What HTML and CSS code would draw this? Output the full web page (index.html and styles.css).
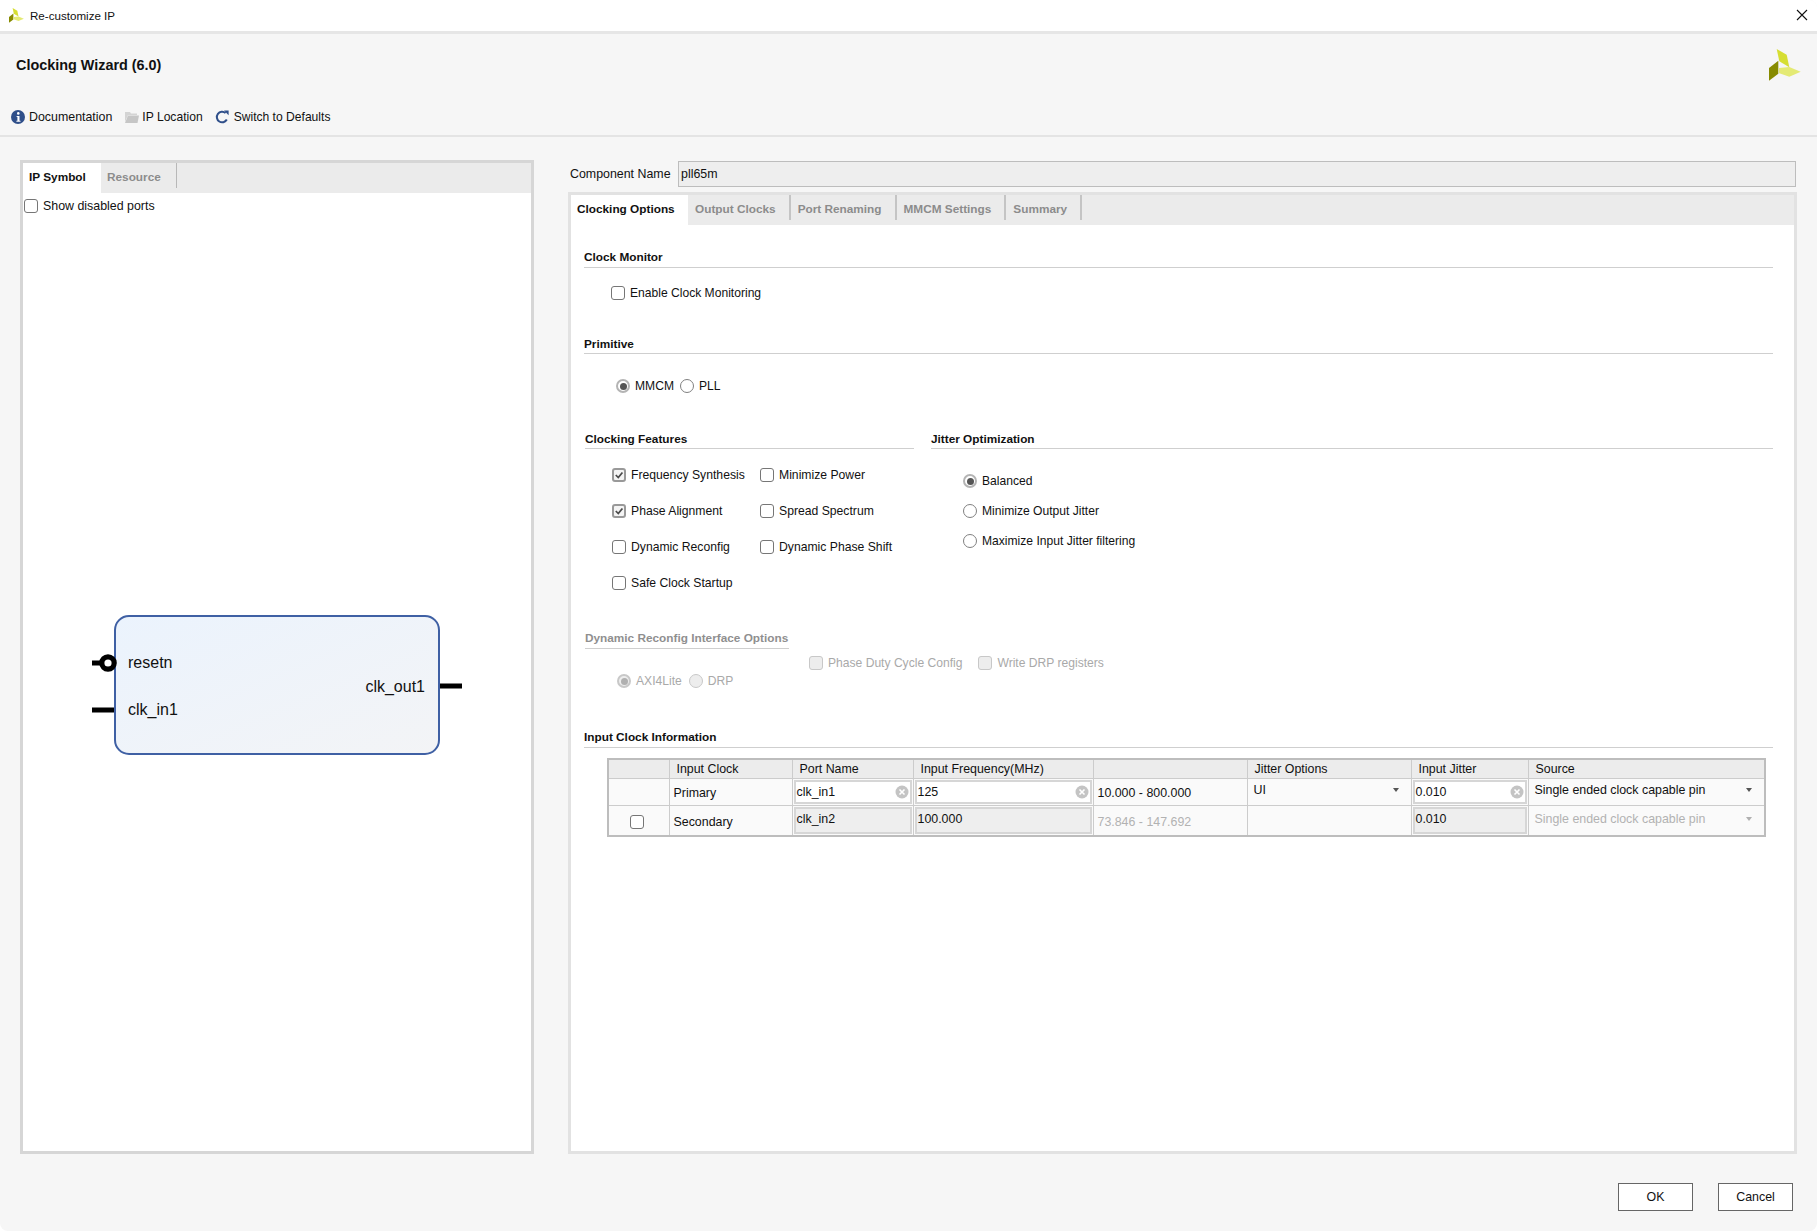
FILE: index.html
```html
<!DOCTYPE html>
<html lang="en">
<head>
    <meta charset="UTF-8">
    <title>Re-customize IP</title>
    <link rel="stylesheet" href="styles.css">
</head>
<body>
    <div class="window">
        <div class="titlebar">
            <svg class="titlelogo" viewBox="0 0 32 32"><polygon points="7.7,0 17.7,5.7 20.3,18.3 10.3,12.3" fill="#d6de33"/><polygon points="9.3,11.7 9.3,24.7 0,31.7 0,19" fill="#878b00"/><polygon points="10,19 20.3,18 31.7,22.7 20.3,27.7 9.7,24" fill="#e4ea74"/></svg>
            <span class="titletext">Re-customize IP</span>
            <svg class="closeicon" viewBox="0 0 12 12"><path d="M1 1L11 11M11 1L1 11" stroke="#111" stroke-width="1.1" fill="none"/></svg>
        </div>

        <div class="header">
            <div class="wizardname">Clocking Wizard (6.0)</div>
            <svg class="biglogo" viewBox="0 0 32 32"><polygon points="7.7,0 17.7,5.7 20.3,18.3 10.3,12.3" fill="#d6de33"/><polygon points="9.3,11.7 9.3,24.7 0,31.7 0,19" fill="#878b00"/><polygon points="10,19 20.3,18 31.7,22.7 20.3,27.7 9.7,24" fill="#e4ea74"/></svg>
        </div>

        <div class="toolbar">
            <div class="toolitem doc">
                <svg viewBox="0 0 14 14"><circle cx="7" cy="7" r="7" fill="#2f4f8a"/><circle cx="7.3" cy="3.4" r="1.3" fill="#fff"/><path d="M5.6 6h2.9v4.7h1v1H5.4v-1h1V7H5.6z" fill="#fff"/></svg>
                <span>Documentation</span>
            </div>
            <div class="toolitem loc">
                <svg viewBox="0 0 14 12"><path d="M0 1h5l1 1.5h6V4H3L0 11z" fill="#d4d4d4"/><path d="M3 4.5h11L12.5 12H0z" fill="#c6c6c6"/></svg>
                <span>IP Location</span>
            </div>
            <div class="toolitem defaults">
                <svg viewBox="0 0 14 14"><path d="M11.8 9.6A5.3 5.3 0 1 1 10.6 3" stroke="#2f4f8a" stroke-width="2" fill="none"/><polygon points="9,0.5 13.6,0.5 13.6,5.2" fill="#2f4f8a"/></svg>
                <span>Switch to Defaults</span>
            </div>
        </div>

        <div class="main">
            <div class="leftpanel">
                <div class="tabbar">
                    <div class="tab active lefttab1">IP Symbol</div>
                    <div class="tab lefttab2">Resource</div>
                </div>
                <div class="leftbody">
                    <label class="opt showports"><span class="box"></span>Show disabled ports</label>
                    <svg class="symbol" width="400" height="160" viewBox="0 0 400 160">
                        <defs>
                            <linearGradient id="blockfill" x1="0" y1="0" x2="1" y2="1">
                                <stop offset="0" stop-color="#ebf3fd"/>
                                <stop offset="1" stop-color="#f3f4f6"/>
                            </linearGradient>
                        </defs>
                        <rect x="23" y="11" width="324" height="138" rx="14" fill="url(#blockfill)" stroke="#3f60a4" stroke-width="2"/>
                        <rect x="0" y="55.5" width="12" height="5" fill="#000"/>
                        <circle cx="16" cy="58" r="6.2" fill="#fff" stroke="#000" stroke-width="5.2"/>
                        <rect x="0" y="102.5" width="22" height="5" fill="#000"/>
                        <rect x="348" y="78.5" width="22" height="5" fill="#000"/>
                        <text x="36" y="63" class="portname">resetn</text>
                        <text x="36" y="110" class="portname">clk_in1</text>
                        <text x="333" y="87" class="portname" text-anchor="end">clk_out1</text>
                    </svg>
                </div>
            </div>

            <div class="rightcol">
                <div class="namerow">
                    <span class="namelabel">Component Name</span>
                    <div class="namefield">pll65m</div>
                </div>
                <div class="rightpanel">
                    <div class="tabbar">
                        <div class="tab active">Clocking Options</div>
                        <div class="tab sep">Output Clocks</div>
                        <div class="tab sep">Port Renaming</div>
                        <div class="tab sep">MMCM Settings</div>
                        <div class="tab sep">Summary</div>
                    </div>
                    <div class="content">
                        <div class="section monitor">Clock Monitor</div>
                        <label class="opt enable"><span class="box"></span>Enable Clock Monitoring</label>

                        <div class="section primitive">Primitive</div>
                        <div class="primradios">
                            <label class="opt"><span class="radio on"></span>MMCM</label>
                            <label class="opt"><span class="radio"></span>PLL</label>
                        </div>

                        <div class="featurerow">
                            <div class="featurecol">
                                <div class="section">Clocking Features</div>
                                <div class="checkgrid">
                                    <label class="opt"><span class="box on"><svg viewBox="0 0 14 14"><path d="M2.5 7l3.5 3.6L11.8 3.4" stroke="#4a4a4a" stroke-width="2.4" fill="none"/></svg></span>Frequency Synthesis</label>
                                    <label class="opt"><span class="box"></span>Minimize Power</label>
                                    <label class="opt"><span class="box on"><svg viewBox="0 0 14 14"><path d="M2.5 7l3.5 3.6L11.8 3.4" stroke="#4a4a4a" stroke-width="2.4" fill="none"/></svg></span>Phase Alignment</label>
                                    <label class="opt"><span class="box"></span>Spread Spectrum</label>
                                    <label class="opt"><span class="box"></span>Dynamic Reconfig</label>
                                    <label class="opt"><span class="box"></span>Dynamic Phase Shift</label>
                                    <label class="opt"><span class="box"></span>Safe Clock Startup</label>
                                </div>
                            </div>
                            <div class="jittercol">
                                <div class="section">Jitter Optimization</div>
                                <div class="jitterradios">
                                    <label class="opt"><span class="radio on"></span>Balanced</label>
                                    <label class="opt"><span class="radio"></span>Minimize Output Jitter</label>
                                    <label class="opt"><span class="radio"></span>Maximize Input Jitter filtering</label>
                                </div>
                            </div>
                        </div>

                        <div class="section drphead">Dynamic Reconfig Interface Options</div>
                        <div class="drprow">
                            <div class="drpradios">
                                <label class="opt off"><span class="radio on"></span>AXI4Lite</label>
                                <label class="opt off"><span class="radio"></span>DRP</label>
                            </div>
                            <div class="drpchecks">
                                <label class="opt off"><span class="box"></span>Phase Duty Cycle Config</label>
                                <label class="opt off"><span class="box"></span>Write DRP registers</label>
                            </div>
                        </div>

                        <div class="section inputhead">Input Clock Information</div>
                        <table class="clocktable">
                            <colgroup>
                                <col class="c1"><col class="c2"><col class="c3"><col class="c4">
                                <col class="c5"><col class="c6"><col class="c7"><col class="c8">
                            </colgroup>
                            <tr class="headrow">
                                <th></th>
                                <th class="indent">Input Clock</th>
                                <th class="indent">Port Name</th>
                                <th class="indent">Input Frequency(MHz)</th>
                                <th></th>
                                <th class="indent">Jitter Options</th>
                                <th class="indent">Input Jitter</th>
                                <th class="indent">Source</th>
                            </tr>
                            <tr class="row1">
                                <td></td>
                                <td class="plain">Primary</td>
                                <td><div class="field">clk_in1<svg class="clear" viewBox="0 0 14 14"><circle cx="7" cy="7" r="6.5" fill="#c4c4c4"/><path d="M4.5 4.5l5 5M9.5 4.5l-5 5" stroke="#fff" stroke-width="1.6"/></svg></div></td>
                                <td><div class="field">125<svg class="clear" viewBox="0 0 14 14"><circle cx="7" cy="7" r="6.5" fill="#c4c4c4"/><path d="M4.5 4.5l5 5M9.5 4.5l-5 5" stroke="#fff" stroke-width="1.6"/></svg></div></td>
                                <td class="plain">10.000 - 800.000</td>
                                <td class="combo">UI<span class="arrow"></span></td>
                                <td><div class="field">0.010<svg class="clear" viewBox="0 0 14 14"><circle cx="7" cy="7" r="6.5" fill="#c4c4c4"/><path d="M4.5 4.5l5 5M9.5 4.5l-5 5" stroke="#fff" stroke-width="1.6"/></svg></div></td>
                                <td class="combo">Single ended clock capable pin<span class="arrow"></span></td>
                            </tr>
                            <tr class="row2">
                                <td class="mid"><span class="box"></span></td>
                                <td class="plain">Secondary</td>
                                <td><div class="field grey">clk_in2</div></td>
                                <td><div class="field grey">100.000</div></td>
                                <td class="plain dim">73.846 - 147.692</td>
                                <td></td>
                                <td><div class="field grey">0.010</div></td>
                                <td class="combo dim">Single ended clock capable pin<span class="arrow light"></span></td>
                            </tr>
                        </table>
                    </div>
                </div>
            </div>
        </div>

        <div class="footer">
            <button class="btn">OK</button>
            <button class="btn">Cancel</button>
        </div>
    </div>
</body>
</html>
```

FILE: styles.css
```css
* {
    box-sizing: border-box;
}
html, body {
    height: 1232px;
}
body {
    margin: 0;
    background-color: #ffffff;
    font-family: "Liberation Sans", Arial, sans-serif;
    font-size: 12.1px;
    color: #111;
}
.window {
    width: 1817px;
    height: 1231px;
    background-color: #f6f6f6;
    border-radius: 0 8px 8px 8px;
    overflow: hidden;
}

/* title bar */
.titlebar {
    display: flex;
    align-items: center;
    height: 34px;
    padding: 1px 8px 2px 9px;
    background-color: #ffffff;
    border-bottom: 3px solid #e6e6e6;
}
.titlelogo {
    width: 15px;
    height: 15px;
}
.titletext {
    margin-left: 6px;
    font-size: 11.6px;
    flex: 1;
}
.closeicon {
    width: 12px;
    height: 12px;
    margin-right: 1px;
}

/* header */
.header {
    display: flex;
    justify-content: space-between;
    align-items: center;
    height: 62px;
    padding: 0 16px;
}
.wizardname {
    font-size: 14.4px;
    font-weight: bold;
}
.biglogo {
    width: 32px;
    height: 32px;
}
.toolbar {
    display: flex;
    align-items: center;
    height: 41px;
    padding: 3px 0 0 11px;
    border-bottom: 2px solid #e4e4e4;
}
.toolitem {
    display: flex;
    align-items: center;
}
.toolitem svg {
    width: 14px;
    height: 14px;
    margin-right: 4px;
}
.doc {
    font-size: 12.4px;
    margin-right: 13px;
}
.loc {
    margin-right: 12px;
}
.loc svg {
    margin-right: 3px;
}
.defaults svg {
    margin-right: 5px;
}

/* panels */
.main {
    display: flex;
    padding: 23px 0 0 20px;
}
.leftpanel {
    width: 514px;
    height: 994px;
    border: 3px solid #d6d6d6;
    background-color: #ffffff;
}
.tabbar {
    display: flex;
    height: 30px;
    background-color: #ebebeb;
}
.tab {
    height: 30px;
    padding: 0 15px 0 6px;
    line-height: 29px;
    font-size: 11.8px;
    font-weight: bold;
    color: #8c8c8c;
    white-space: nowrap;
    position: relative;
}
.tab.active {
    background-color: #ffffff;
    color: #111;
}
.tab.sep::after {
    content: "";
    position: absolute;
    right: 0;
    top: 0;
    width: 2px;
    height: 25px;
    background-color: #c4c4c4;
}
.lefttab1 {
    width: 78px;
}
.lefttab2 {
    width: 76px;
}
.lefttab2::after {
    content: "";
    position: absolute;
    right: 0;
    top: 0;
    width: 1px;
    height: 25px;
    background-color: #b8b8b8;
}
.leftbody {
    padding: 5px 0 0 1px;
}
.showports {
    height: 14px;
    font-size: 12.4px;
}
.symbol {
    display: block;
    margin: 391px 0 0 68px;
}
.portname {
    font-family: "Liberation Sans", Arial, sans-serif;
    font-size: 16px;
    fill: #111;
}

.rightcol {
    width: 1229px;
    margin-left: 34px;
}
.namerow {
    display: flex;
    align-items: center;
    height: 26px;
    margin-top: 1px;
}
.namelabel {
    margin-left: 2px;
    width: 108px;
    font-size: 12.4px;
}
.namefield {
    width: 1118px;
    height: 26px;
    line-height: 24px;
    padding-left: 2px;
    font-size: 12.4px;
    background-color: #eeeeee;
    border: 1px solid #bdbdbd;
}
.rightpanel {
    height: 962px;
    margin-top: 5px;
    border: 3px solid #e2e2e2;
    background-color: #ebebeb;
}
.rightpanel .tab.active {
    width: 117px;
}
.rightpanel .tab.sep {
    padding-left: 7px;
}
.content {
    height: 926px;
    padding: 24px 21px 0 13px;
    background-color: #ffffff;
}

/* section headings */
.section {
    font-size: 11.8px;
    font-weight: bold;
    line-height: 16px;
    padding-bottom: 1px;
    border-bottom: 1px solid #cfcfcf;
    white-space: nowrap;
}
.monitor {
    padding-bottom: 2px;
}
.primitive {
    margin-top: 35px;
}
.drphead {
    width: 204px;
    margin-top: 39px;
    margin-left: 1px;
    padding-bottom: 2px;
    color: #8f8f8f;
}
.inputhead {
    margin-top: 46px;
    padding-bottom: 2px;
}

/* checkboxes and radios */
.opt {
    display: flex;
    align-items: center;
    height: 16px;
    white-space: nowrap;
}
.box {
    display: inline-block;
    flex: none;
    width: 14px;
    height: 14px;
    margin-right: 5px;
    background-color: #ffffff;
    border: 1px solid #767676;
    border-radius: 3px;
}
.box.on {
    background-color: #f4f4f4;
    border: 2px solid #999999;
}
.box svg {
    display: block;
    width: 10px;
    height: 10px;
}
.radio {
    display: inline-block;
    flex: none;
    position: relative;
    width: 14px;
    height: 14px;
    margin-right: 5px;
    background-color: #ffffff;
    border: 1px solid #808080;
    border-radius: 50%;
}
.radio.on {
    border: 2px solid #b4b4b4;
}
.radio.on::after {
    content: "";
    position: absolute;
    left: 1.5px;
    top: 1.5px;
    width: 7px;
    height: 7px;
    border-radius: 50%;
    background-color: #555555;
}
.off {
    color: #a9a9a9;
}
.off .box {
    background-color: #ededed;
    border-color: #c8c8c8;
}
.off .radio {
    background-color: #ededed;
    border-color: #c8c8c8;
}
.off .radio.on::after {
    background-color: #b0b0b0;
}

.enable {
    margin: 17px 0 0 27px;
}
.primradios {
    display: flex;
    gap: 6px;
    margin: 24px 0 0 32px;
}
.featurerow {
    display: flex;
    margin: 37px 0 0 1px;
}
.featurecol {
    width: 329px;
}
.jittercol {
    flex: 1;
    margin-left: 17px;
}
.checkgrid {
    display: grid;
    grid-template-columns: 148px 1fr;
    row-gap: 20px;
    margin: 18px 0 0 27px;
    font-size: 12.2px;
}
.jitterradios {
    display: flex;
    flex-direction: column;
    gap: 14px;
    margin: 24px 0 0 32px;
}
.drprow {
    display: flex;
    height: 34px;
    margin-left: 33px;
}
.drpradios {
    display: flex;
    gap: 7px;
    width: 192px;
    margin-top: 24px;
}
.drpchecks {
    display: flex;
    gap: 16px;
    margin-top: 6px;
}

/* clock table */
.clocktable {
    width: 1157px;
    margin: 10px 0 0 23px;
    table-layout: fixed;
    border-collapse: collapse;
    border: 2px solid #bdbdbd;
    background-color: #fafafa;
    font-size: 12.4px;
}
.c1 { width: 61px; }
.c2 { width: 123px; }
.c3 { width: 121px; }
.c4 { width: 180px; }
.c5 { width: 154px; }
.c6 { width: 164px; }
.c7 { width: 117px; }
.c8 { width: 237px; }
.clocktable th, .clocktable td {
    padding: 0;
    border: 1px solid #cccccc;
    font-weight: normal;
    text-align: left;
    overflow: hidden;
    white-space: nowrap;
}
.headrow {
    height: 19px;
    background-color: #ececec;
}
.headrow th {
    line-height: 14px;
}
.indent {
    padding-left: 7px !important;
}
.row1 {
    height: 26px;
}
.row2 {
    height: 31px;
}
.plain {
    padding: 3px 0 0 4px !important;
}
.combo {
    position: relative;
    padding: 0 0 3px 6px !important;
}
.mid {
    text-align: center !important;
    padding-right: 4px !important;
}
.mid .box {
    margin: 3px 0 0;
    vertical-align: middle;
}
.dim {
    color: #b2b2b2;
}
.field {
    display: flex;
    align-items: center;
    justify-content: space-between;
    height: 24px;
    margin: 1px 1px 1px 1px;
    padding: 0 1px 0 1px;
    background-color: #ffffff;
    border: 2px solid #d6d6d6;
}
.row2 .field {
    height: 27px;
    padding-bottom: 3px;
}
.field.grey {
    background-color: #eeeeee;
}
.clear {
    width: 14px;
    height: 14px;
}
.arrow {
    position: absolute;
    right: 12px;
    top: 9px;
    width: 0;
    height: 0;
    border-left: 3.5px solid transparent;
    border-right: 3.5px solid transparent;
    border-top: 4px solid #555555;
}
.arrow.light {
    top: 11px;
    border-top-color: #b0b0b0;
}

/* footer */
.footer {
    display: flex;
    justify-content: flex-end;
    gap: 25px;
    padding: 29px 24px 0 0;
}
.btn {
    width: 75px;
    height: 28px;
    padding: 0;
    background-color: #ffffff;
    border: 1px solid #666666;
    font-family: "Liberation Sans", Arial, sans-serif;
    font-size: 12.4px;
    color: #111;
}
```
